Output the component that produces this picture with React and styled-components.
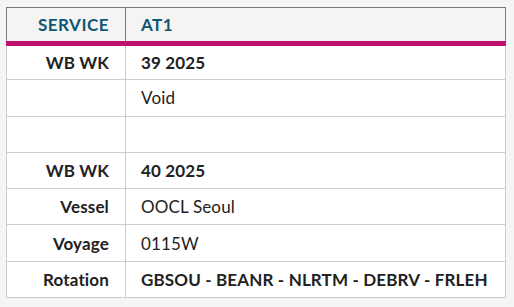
import React from 'react';
import styled, { createGlobalStyle } from 'styled-components';

const GlobalStyle = createGlobalStyle`
  body {
    margin: 0;
    background: #f5f5f3;
    font-family: Lato, "Open Sans", sans-serif;
  }
`;

const Page = styled.div`
  padding: 7px 8px 10px 6px;
`;

const Table = styled.table`
  width: 500px;
  table-layout: fixed;
  border-collapse: collapse;
  background: #fff;
  font-size: 17px;
  letter-spacing: 0.15px;
  color: #222;
`;

const HeadCell = styled.th`
  height: 36px;
  padding: 0 16px 0 15px;
  box-sizing: border-box;
  background: #f5f4f2;
  border: 1px solid #7a7a7a;
  border-bottom: 5px solid #c0106e;
  color: #0b5776;
  font-weight: 700;
  letter-spacing: 0.5px;
  text-align: ${p => (p.$label ? 'right' : 'left')};
  width: ${p => (p.$label ? '119px' : 'auto')};
`;

const Cell = styled.td`
  height: 36.3px;
  padding: 0 16px 0 15px;
  box-sizing: border-box;
  border: 1px solid #cdcdcd;
  white-space: nowrap;
  font-weight: ${p => (p.$bold ? 700 : 400)};
  text-align: ${p => (p.$label ? 'right' : 'left')};
`;

const rows = [
  { label: 'WB WK', value: '39 2025', bold: true },
  { label: '', value: 'Void' },
  { label: '', value: '' },
  { label: 'WB WK', value: '40 2025', bold: true },
  { label: 'Vessel', value: 'OOCL Seoul' },
  { label: 'Voyage', value: '0115W' },
  { label: 'Rotation', value: 'GBSOU - BEANR - NLRTM - DEBRV - FRLEH', bold: true },
];

export default function App() {
  return (
    <>
      <GlobalStyle />
      <Page>
        <Table>
          <thead>
            <tr>
              <HeadCell $label>SERVICE</HeadCell>
              <HeadCell>AT1</HeadCell>
            </tr>
          </thead>
          <tbody>
            {rows.map((r, i) => (
              <tr key={i}>
                <Cell $label $bold>{r.label}</Cell>
                <Cell $bold={r.bold}>{r.value}</Cell>
              </tr>
            ))}
          </tbody>
        </Table>
      </Page>
    </>
  );
}
